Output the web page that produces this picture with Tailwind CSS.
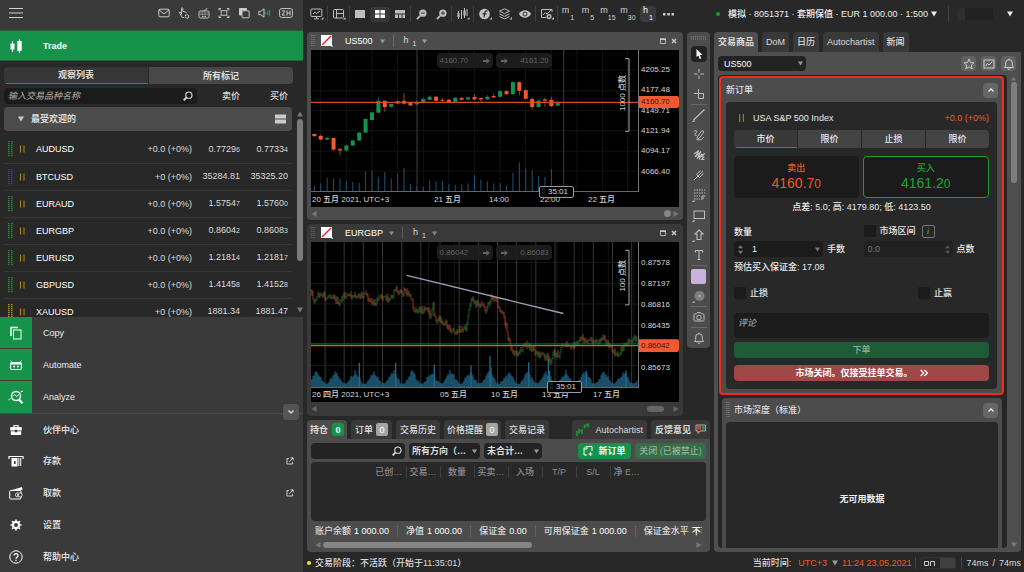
<!DOCTYPE html>
<html lang="zh-CN">
<head>
<meta charset="utf-8">
<meta name="viewport" content="width=device-width, initial-scale=1">
<title>cTrader</title>
<script src="https://cdn.jsdelivr.net/npm/@tailwindcss/browser@4"></script>
</head>
<body class="bg-[#282828] font-['Liberation_Sans','Noto_Sans_CJK_SC',sans-serif] text-[9px] leading-3 text-[#dcdcdc] font-medium">
<svg class="hidden">
  <symbol id="dn" viewBox="0 0 6 6"><path d="M0 .5h6L3 5.5z" fill="currentColor"/></symbol>
  <symbol id="up" viewBox="0 0 6 6"><path d="M0 5.5h6L3 .5z" fill="currentColor"/></symbol>
  <symbol id="lt" viewBox="0 0 6 6"><path d="M5.500 0v6L.5 3z" fill="currentColor"/></symbol>
  <symbol id="rt" viewBox="0 0 6 6"><path d="M.5 0v6L5.500 3z" fill="currentColor"/></symbol>
  <symbol id="lens" viewBox="0 0 12 12"><circle cx="7.500" cy="4.500" r="3.400" fill="none" stroke="currentColor" stroke-width="1.200"/><path d="M5 7L1.800 10.200" stroke="currentColor" stroke-width="2"/></symbol>
  <symbol id="updn" viewBox="0 0 8 12"><path d="M1 4.500h6L4 1zM1 7.500h6L4 11z" fill="currentColor"/></symbol>
  <symbol id="grip" viewBox="0 0 4 12"><path d="M.8 0v12M3 0v12" stroke="currentColor" stroke-width="1" stroke-dasharray="1 1"/></symbol>
  <symbol id="chevup" viewBox="0 0 8 8"><path d="M1.500 5.500L4 3l2.500 2.500" fill="none" stroke="currentColor" stroke-width="1.300"/></symbol>
  <symbol id="win" viewBox="0 0 6 6"><path d="M.5 1h5v4.500h-5z" fill="none" stroke="currentColor" stroke-width=".8"/><path d="M0 .5h6v1.500H0z" fill="currentColor"/></symbol>
  <symbol id="x" viewBox="0 0 6 6"><path d="M1 1l4 4M5 1L1 5" stroke="currentColor" stroke-width="1.400"/></symbol>
  <symbol id="nolink" viewBox="0 0 12 12"><path d="M0 0h11v11H0z" fill="#fff"/><path d="M1 10L10 1" stroke="#e0232b" stroke-width="1.500"/><path d="M10 12h2v-2z" fill="#ccc"/></symbol>
  <symbol id="arr" viewBox="0 0 7 6"><path d="M0 2h3.500V.3L7 3 3.500 5.700V4H0z" fill="currentColor"/></symbol>
  <symbol id="bell" viewBox="0 0 12 12"><path d="M1.500 9.500h9L9.300 7.800V5a3.300 3.300 0 0 0-6.600 0v2.800zM6 .6v1.200M4.800 10.500a1.200 1 0 0 0 2.400 0" fill="none" stroke="currentColor" stroke-width="1"/></symbol>
  <symbol id="ext" viewBox="0 0 8 8"><path d="M3 1.500H1v5.500h5.500V5M4.500 .8h2.700v2.700M7 1L3.200 4.800" fill="none" stroke="currentColor" stroke-width="1"/></symbol>
</svg>

<div class="flex h-screen w-full gap-1 overflow-hidden pr-[3px]">

  <!-- Left navigation -->
  <aside class="flex w-[303px] shrink-0 flex-col overflow-hidden">
    <header class="flex h-[30px] shrink-0 items-center bg-[#3a3a3a] pl-[9px] pr-[10px] pb-1 text-[#c9c9c9]">
      <button aria-label="菜单" class="flex"><svg class="size-[14px]" viewBox="0 0 14 14"><path d="M0 2.500h14M0 7h14M0 11.500h14" stroke="#d0d0d0" stroke-width="1.100"/></svg></button>
      <div class="ml-auto flex items-center gap-2 fill-none stroke-current">
        <button aria-label="邮件" class="flex"><svg class="size-3" viewBox="0 0 12 12"><rect x=".8" y="2.200" width="10.400" height="7.600" rx="1.200"/><path d="M1 3l5 3.800L11 3"/></svg></button>
        <button aria-label="快速交易" class="flex"><svg class="size-3" viewBox="0 0 12 12"><path d="M3.500 7.500V1.300c0-.8 1.300-.8 1.300 0v3l3 .9c.8.3.7 1 .7 1M3.500 5.500l-2.300-.3 3 5.300H6" stroke-width=".9"/><circle cx="9" cy="9.500" r="1.700" stroke-width="1.200" stroke-dasharray="1.200 .5"/></svg></button>
        <button aria-label="键盘" class="flex"><svg class="size-3" viewBox="0 0 12 12"><rect x="1" y="4" width="10" height="7" rx="1.500"/><path d="M6 4c0-2 3-.5 3-3" stroke-width=".8"/><path d="M2.500 6h7M2.500 7.700h7M4 9.500h4" stroke-dasharray="1 .6"/></svg></button>
        <button aria-label="全屏" class="flex"><svg class="size-3" viewBox="0 0 12 12"><path d="M1 3.500V1.500h2M9 1.500h2v2M11 8.500v2H9M3 10.500H1v-2M3.200 3.700h5.600v4.600H3.200zM1 1.500l2.200 2.200M11 1.500L8.800 3.700M1 10.500l2.200-2.200M11 10.500L8.800 8.300" stroke-width=".9"/></svg></button>
        <button aria-label="窗口" class="flex"><svg class="size-3" viewBox="0 0 12 12"><path d="M1.500 1.500h7v1.500H3.500v5h-2z" fill="#d0d0d0"/><rect x="4" y="3.800" width="7.200" height="7" rx=".8"/></svg></button>
        <button aria-label="声音" class="flex"><svg class="h-3 w-[13px]" viewBox="0 0 13 12"><path d="M.8 4.300h2L6 1.800v8.400L2.800 7.700h-2z"/><path d="M8 4.500v3M9.800 3.700v4.600M11.600 2.800v6.400" stroke="#239a4b"/></svg></button>
        <button aria-label="语言" class="flex"><svg class="h-3 w-[14px]" viewBox="0 0 14 12"><rect x=".6" y="1.600" width="12.800" height="8.800" rx="2"/><path d="M3 4h3L3 8h3.200M8 3.500v5M11 3.500v5M8 6h3"/></svg></button>
      </div>
    </header>

    <a href="#" class="flex h-[31px] shrink-0 items-center border-y border-[#2b5c3c] bg-[#15934a] pl-[9px] font-bold text-white">
      <svg class="h-4 w-[14px]" viewBox="0 0 14 16"><path d="M3.500 3v11M10.500 1v14" stroke="#fff"/><rect x="1.500" y="5.500" width="4" height="6" fill="#fff"/><rect x="8.300" y="3" width="4.400" height="10" fill="#fff"/></svg>
      <span class="ml-5">Trade</span>
    </a>

    <section class="flex min-h-0 flex-1 flex-col overflow-hidden pt-[6px]">
      <div class="mr-[10px] ml-1 flex h-[17px] shrink-0 gap-px overflow-hidden rounded-sm font-bold">
        <button class="flex-1 border-b border-[#239a4b] bg-[#363636]">观察列表</button>
        <button class="flex-1 bg-[#484848]">所有标记</button>
      </div>
      <div class="mt-1 ml-1 flex h-4 shrink-0 items-center pr-[15px]">
        <label class="flex h-4 w-[193px] items-center rounded-sm bg-[#1b1b1b] px-1">
          <input aria-label="搜索" placeholder="输入交易品种名称" class="min-w-0 flex-1 italic outline-none placeholder:text-[#999]">
          <svg class="size-[11px] text-[#ddd]"><use href="#lens"/></svg>
        </label>
        <span class="flex-1 text-right">卖价</span><span class="w-12 text-right">买价</span>
      </div>
      <div class="mt-[3px] flex min-h-0 flex-1">
        <div class="ml-1 min-w-0 flex-1 overflow-hidden">
          <div class="flex h-6 items-center rounded-sm bg-[#4c4c4c] pr-[6px] pl-[14px] font-bold">
            <svg class="size-[6px] text-[#ccc]"><use href="#dn"/></svg><span class="ml-[7px]">最受欢迎的</span>
            <svg class="ml-auto h-[10px] w-[11px]" viewBox="0 0 11 10"><path d="M0 .5h11v4H0zM0 5.500h11v4H0z" fill="#ccc"/></svg>
          </div>
          <table class="mt-[5px] w-full table-fixed">
            <colgroup><col class="w-8"><col><col class="w-16"><col class="w-12"><col class="w-12"></colgroup>
            <tbody id="watch"></tbody>
          </table>
        </div>
        <div class="ml-1 flex w-[7px] flex-col items-center pt-1 pb-1 text-[#777]">
          <svg class="size-[6px]"><use href="#up"/></svg>
          <div class="mt-[2px] h-[142px] w-[6px] rounded-full bg-[#7b7b7b]"></div>
          <svg class="mt-auto size-[6px]"><use href="#dn"/></svg>
        </div>
      </div>
    </section>

    <nav class="relative h-[255px] shrink-0 overflow-hidden bg-[#3a3a3a] text-[#ececec]">
      <a href="#" class="flex h-8 items-center"><span class="flex h-full w-8 items-center justify-center border-b border-[#3a3a3a] bg-[#15934a]"><svg class="size-[14px]" viewBox="0 0 14 14"><path d="M2 10V1.500h7" fill="none" stroke="#fff" stroke-width="1.500"/><rect x="4.500" y="4" width="7.500" height="9" fill="none" stroke="#fff"/></svg></span><span class="ml-[11px]">Copy</span></a>
      <a href="#" class="flex h-8 items-center"><span class="flex h-full w-8 items-center justify-center border-b border-[#3a3a3a] bg-[#15934a]"><svg class="size-[14px]" viewBox="0 0 14 14"><path d="M1.500 2.500l2 2M12.500 2.500l-2 2" stroke="#fff"/><path d="M3 4h8a2 2 0 0 1 2 2H1a2 2 0 0 1 2-2z" fill="#fff"/><rect x="1.500" y="6" width="11" height="5.500" rx="1.500" fill="none" stroke="#fff" stroke-width="1.200"/><path d="M4 8.500h2M8 8.500h2" stroke="#fff" stroke-width="1.500"/></svg></span><span class="ml-[11px]">Automate</span></a>
      <a href="#" class="flex h-8 items-center"><span class="flex h-full w-8 items-center justify-center bg-[#15934a]"><svg class="size-4" viewBox="0 0 16 16"><circle cx="8" cy="7" r="4.500" fill="none" stroke="#fff" stroke-width="1.400"/><path d="M11 10.500l3.500 3.800" stroke="#fff" stroke-width="2"/><path d="M5 7l2-1.500 1.500 2L11 5.500M.5 11l2-1.500M12.500 3l2.500-1" fill="none" stroke="#fff"/></svg></span><span class="ml-[11px]">Analyze</span></a>
      <a href="#" class="flex h-8 items-center border-t border-[#484848]"><span class="flex w-8 justify-center"><svg class="size-3" viewBox="0 0 12 12"><path d="M4 3V1.500h4V3" fill="none" stroke="#fff" stroke-width="1.200"/><path d="M.3 3h11.400v3.500H7.200v-.8H4.800v.8H.3zM.8 7.300h4v1h2.400v-1h4V11H.8z" fill="#fff"/></svg></span><span class="ml-[11px]">伙伴中心</span></a>
      <a href="#" class="flex h-8 items-center pr-[9px]"><span class="flex w-8 justify-center"><svg class="h-3 w-4" viewBox="0 0 16 12"><path d="M1 4V1.500h14V4" fill="none" stroke="#fff" stroke-width="1.200"/><rect x="3.500" y="3" width="6" height="8.500" fill="#fff"/><rect x="6" y="6" width="1.600" height="3" fill="#3a3a3a"/><path d="M10.800 3v8M12.700 3v8" stroke="#fff"/></svg></span><span class="ml-[11px]">存款</span><svg class="ml-auto size-2 text-[#ccc]"><use href="#ext"/></svg></a>
      <a href="#" class="flex h-8 items-center pr-[9px]"><span class="flex w-8 justify-center"><svg class="size-[14px]" viewBox="0 0 14 14"><path d="M3 4l10-3 .5 3z" fill="#fff"/><rect x=".7" y="4.500" width="11.300" height="8.500" rx="1" fill="none" stroke="#fff"/><rect x="6.500" y="7" width="6.500" height="3.800" rx="1.500" fill="#3a3a3a" stroke="#fff" stroke-width=".8"/><circle cx="9" cy="9" r="1" fill="#fff"/></svg></span><span class="ml-[11px]">取款</span><svg class="ml-auto size-2 text-[#ccc]"><use href="#ext"/></svg></a>
      <a href="#" class="flex h-8 items-center"><span class="flex w-8 justify-center"><svg class="size-3" viewBox="0 0 12 12"><circle cx="6" cy="6" r="3" fill="none" stroke="#fff" stroke-width="2"/><path d="M6 .5v2M6 9.500v2M.5 6h2M9.500 6h2M2.100 2.100l1.400 1.400M8.500 8.500l1.400 1.400M2.100 9.900l1.400-1.400M8.500 3.500l1.400-1.400" stroke="#fff" stroke-width="1.700"/></svg></span><span class="ml-[11px]">设置</span></a>
      <a href="#" class="flex h-8 items-center"><span class="flex w-8 justify-center"><svg class="size-[14px]" viewBox="0 0 14 14"><circle cx="7" cy="7" r="6.200" fill="none" stroke="#fff"/><path d="M5 5.500a2 2 0 1 1 3 1.800c-.7.400-1 .7-1 1.400M7 9.800v1.300" fill="none" stroke="#fff" stroke-width="1.300"/></svg></span><span class="ml-[11px]">帮助中心</span></a>
      <button aria-label="收起" class="absolute top-[87px] right-1 flex size-4 items-center justify-center rounded-sm bg-[#545454]"><svg class="size-2 rotate-180 text-[#ddd]"><use href="#chevup"/></svg></button>
    </nav>
  </aside>

  <!-- Workspace -->
  <div class="flex min-w-0 flex-1 flex-col">
    <header class="flex h-8 shrink-0 items-center pb-1">
      <div class="flex shrink-0 items-center fill-none stroke-current text-[#bdbdbd]">
        <button aria-label="图表" class="flex w-5 justify-center"><svg class="h-3 w-[14px]" viewBox="0 0 14 12"><rect x=".8" y="1" width="11" height="7.500" rx="1"/><path d="M3 6l2-2 1.500 1.500L10 3M4 10.800h5M6.500 8.500v2"/><path d="M11 11.500h2.500V9z" fill="currentColor" stroke="none"/></svg></button>
        <i class="mr-px h-4 w-px bg-[#3e3e3e]"></i>
        <button aria-label="布局" class="flex w-5 justify-center"><svg class="h-3 w-[14px]" viewBox="0 0 14 12"><rect x="1.500" y="1.500" width="10" height="8.500" rx="1"/><path d="M4.500 1.500V10M4.500 5.500h7"/><path d="M11 11.500h2.500V9z" fill="currentColor" stroke="none"/></svg></button>
        <i class="h-4 w-px bg-[#3e3e3e]"></i>
        <button aria-label="单一" class="flex w-5 justify-center"><svg class="size-[10px]" viewBox="0 0 10 10"><path d="M0 1h10v8H0z" fill="#bdbdbd" stroke="none"/></svg></button>
        <button aria-label="网格" class="flex h-[15px] w-5 items-center justify-center rounded-sm bg-[#383838]"><svg class="size-[10px]" viewBox="0 0 10 10"><path d="M0 1h4.500v3.500H0zM5.500 1H10v3.500H5.500zM0 5.500h4.500V9H0zM5.500 5.500H10V9H5.500z" fill="#fff" stroke="none"/></svg></button>
        <button aria-label="自由" class="flex w-5 justify-center"><svg class="size-[10px]" viewBox="0 0 10 10"><path d="M0 1h10v3.500H0zM0 5.500h3V9H0zM4 5.500h2.500V9H4zM7.500 5.500H10V9H7.500z" fill="#bdbdbd" stroke="none"/></svg></button>
        <i class="h-4 w-px bg-[#3e3e3e]"></i>
        <button aria-label="缩小" class="flex w-5 justify-center"><svg class="size-[11px]" viewBox="0 0 12 12"><circle cx="7.500" cy="4.500" r="4" fill="#bdbdbd" stroke="none"/><path d="M5.500 4.500h4" stroke="#282828"/><path d="M4.500 7.500L1 11" stroke-width="2"/></svg></button>
        <button aria-label="放大" class="flex w-5 justify-center"><svg class="size-[11px]" viewBox="0 0 12 12"><circle cx="7.500" cy="4.500" r="4" fill="#bdbdbd" stroke="none"/><path d="M5.500 4.500h4M7.500 2.500v4" stroke="#282828"/><path d="M4.500 7.500L1 11" stroke-width="2"/></svg></button>
        <i class="mr-px h-4 w-px bg-[#3e3e3e]"></i>
        <button aria-label="图表类型" class="flex w-5 justify-center"><svg class="h-3 w-[14px]" viewBox="0 0 14 12"><path d="M2.500 3v8M5.500 2v9M8.500 0v10M11 1v7" /><path d="M2.500 5v4M8.500 2.500v5" stroke-width="2.200"/><path d="M11 11.500h2.500V9z" fill="currentColor" stroke="none"/></svg></button>
        <i class="mr-px h-4 w-px bg-[#3e3e3e]"></i>
        <button aria-label="指标" class="flex w-5 justify-center"><svg class="h-3 w-[14px]" viewBox="0 0 14 12"><circle cx="6.500" cy="6" r="5.300" fill="#c4c4c4" stroke="none"/><path d="M9.500 3.200C7.500 2.500 7 3.500 6.800 5L6 9.300M4.500 5.800h4" stroke="#282828" stroke-width="1.200"/><path d="M11.500 11.500H14V9z" fill="currentColor" stroke="none"/></svg></button>
        <button aria-label="对象" class="flex w-5 justify-center"><svg class="h-3 w-[14px]" viewBox="0 0 14 12"><path d="M6.500 .8l5 2.400-5 2.400-5-2.400zM1.500 6l5 2.400 5-2.400M1.500 8.500l5 2.400 5-2.400"/><path d="M11.500 11.500H14V9z" fill="currentColor" stroke="none"/></svg></button>
        <button aria-label="查看选项" class="flex w-5 justify-center"><svg class="size-3" viewBox="0 0 12 12"><path d="M0 6c3-5 9-5 12 0-3 5-9 5-12 0z" fill="#c8c8c8" stroke="none"/><circle cx="6" cy="6" r="2" fill="#c8c8c8" stroke="#282828"/></svg></button>
        <i class="mr-px h-4 w-px bg-[#3e3e3e]"></i>
        <button aria-label="图表设置" class="flex w-5 justify-center"><svg class="h-3 w-[14px]" viewBox="0 0 14 12"><path d="M6 9.500H1.500v-8H12V4M3 7l2.500-2.500L7 6l4-4"/><circle cx="9" cy="8.500" r="1.800" stroke-width="1.500"/><path d="M11.500 11.500H14V9z" fill="currentColor" stroke="none"/></svg></button>
        <i class="h-4 w-px bg-[#3e3e3e]"></i>
      </div>
      <div class="flex shrink-0 items-center text-[9px] text-[#d0d0d0]">
        <button class="flex h-4 w-5 justify-center gap-px"><span class="leading-2">m</span><span class="self-end text-[7px] leading-2">1</span></button>
        <button class="flex h-4 w-5 justify-center gap-px"><span class="leading-2">m</span><span class="self-end text-[7px] leading-2">5</span></button>
        <button class="flex h-4 w-5 justify-center"><span class="leading-2">m</span><span class="self-end text-[7px] leading-2">15</span></button>
        <button class="flex h-4 w-5 justify-center"><span class="leading-2">m</span><span class="self-end text-[7px] leading-2">30</span></button>
        <button class="mx-[2px] flex h-4 w-4 justify-center gap-px rounded-sm bg-[#3a3a3a] text-white"><span class="leading-2">h</span><span class="self-end text-[7px] leading-2">1</span></button>
        <button aria-label="更多" class="flex w-5 justify-center"><svg class="h-[3px] w-[11px]" viewBox="0 0 11 3"><path d="M0 0h2.500v2.500H0zM4.300 0h2.500v2.500H4.300zM8.500 0H11v2.500H8.500z" fill="#ccc"/></svg></button>
      </div>
    </header>

    <div class="flex min-h-0 flex-1 gap-1">
      <div class="flex min-w-0 flex-1 flex-col gap-1">
        <!-- US500 chart -->
        <section class="flex min-h-0 flex-[188_1_0%] flex-col rounded-sm bg-[#4c4c4c] px-1">
          <div class="flex h-[18px] shrink-0 items-center">
            <svg class="h-3 w-1 text-[#888]"><use href="#grip"/></svg>
            <svg class="ml-[6px] size-3"><use href="#nolink"/></svg>
            <span class="ml-3 text-white">US500</span><svg class="ml-[7px] size-[5px] text-[#999]"><use href="#dn"/></svg>
            <i class="ml-2 h-3 w-px bg-[#6a6a6a]"></i>
            <span class="ml-[10px] flex h-[14px] items-start"><span class="leading-3">h</span><span class="ml-1 self-end text-[7px] leading-2">1</span></span><svg class="ml-[6px] size-[5px] text-[#999]"><use href="#dn"/></svg>
            <button aria-label="最大化" class="ml-auto"><svg class="size-[6px] text-[#ccc]"><use href="#win"/></svg></button>
            <button aria-label="关闭" class="mr-[2px] ml-[5px]"><svg class="size-[6px] text-[#ccc]"><use href="#x"/></svg></button>
          </div>
          <div class="relative flex min-h-0 flex-1 bg-black text-[8px] leading-[10px] text-[#d6d6d6]">
            <div class="flex min-w-0 flex-1 flex-col">
              <svg id="plot1" class="min-h-0 w-full flex-1 border-b border-[#666]" viewBox="20 15 981 425" preserveAspectRatio="none"></svg>
              <div class="grid h-[15px] shrink-0 grid-cols-[122fr_55fr_51fr_48fr_50fr] items-center pl-px whitespace-nowrap"><span>20 五月 2021, UTC+3</span><span>21 五月</span><span>14:00</span><span>22:00</span><span>22 五月</span></div>
            </div>
            <div class="relative mb-[15px] flex w-[41px] shrink-0 flex-col border-l border-[#777] py-[10px] pl-[2px]">
              <span class="flex flex-1 items-center">4205.25</span><span class="flex flex-1 items-center">4177.48</span><span class="flex flex-1 items-center">4149.71</span><span class="flex flex-1 items-center">4121.94</span><span class="flex flex-1 items-center">4094.17</span><span class="flex flex-1 items-center">4066.40</span>
              <span class="absolute top-[46px] right-0 left-0 flex h-3 items-center rounded-r-xs bg-[#f05a32] pl-[2px] text-[#401505]">4160.7<small class="text-[7px]">0</small></span>
            </div>
            <div class="absolute inset-x-0 top-[3px] flex justify-center gap-[3px] pr-[2px] text-[#626262]">
              <button class="flex h-[15px] w-14 items-center justify-between rounded-sm bg-[#1f1f1f]/90 px-[3px]"><span>4160.7<small class="text-[7px]">0</small></span><svg class="h-[6px] w-[7px]"><use href="#arr"/></svg></button>
              <button class="flex h-[15px] w-14 items-center justify-between rounded-sm bg-[#1f1f1f]/90 pr-[3px] pl-[5px]"><svg class="h-[6px] w-[7px]"><use href="#arr"/></svg><span>4161.2<small class="text-[7px]">0</small></span></button>
            </div>
            <span class="absolute top-[25px] right-[51px] rotate-180 [writing-mode:vertical-rl] [text-orientation:sideways]">1000 点数</span>
            <span class="absolute right-[105px] bottom-[9px] flex h-3 w-[35px] items-center gap-[3px] rounded-xs border border-[#999] bg-black px-[2px]"><svg class="h-2 w-[3px] text-[#777]" viewBox="0 0 4 12"><use href="#grip"/></svg>35:01</span>
          </div>
          <div class="flex h-[13px] shrink-0 items-center text-[#777]"><svg class="size-[6px]"><use href="#lt"/></svg><i class="ml-auto size-[7px] rounded-full bg-[#858585]"></i><svg class="ml-[2px] size-[6px]"><use href="#rt"/></svg></div>
        </section>

        <!-- EURGBP chart -->
        <section class="flex min-h-0 flex-[192_1_0%] flex-col rounded-sm bg-[#393939] px-1">
          <div class="flex h-[18px] shrink-0 items-center">
            <svg class="h-3 w-1 text-[#707070]"><use href="#grip"/></svg>
            <svg class="ml-[6px] size-3"><use href="#nolink"/></svg>
            <span class="ml-3 text-white">EURGBP</span><svg class="ml-[6px] size-[5px] text-[#888]"><use href="#dn"/></svg>
            <i class="ml-2 h-3 w-px bg-[#5a5a5a]"></i>
            <span class="ml-[10px] flex h-[14px] items-start"><span class="leading-3">h</span><span class="ml-1 self-end text-[7px] leading-2">1</span></span><svg class="ml-[6px] size-[5px] text-[#888]"><use href="#dn"/></svg>
            <button aria-label="最大化" class="ml-auto"><svg class="size-[6px] text-[#ccc]"><use href="#win"/></svg></button>
            <button aria-label="关闭" class="mr-[2px] ml-[5px]"><svg class="size-[6px] text-[#ccc]"><use href="#x"/></svg></button>
          </div>
          <div class="relative flex min-h-0 flex-1 bg-black text-[8px] leading-[10px] text-[#d6d6d6]">
            <div class="flex min-w-0 flex-1 flex-col">
              <svg id="plot2" class="min-h-0 w-full flex-1 border-b border-[#666]" viewBox="20 67 981 438" preserveAspectRatio="none"></svg>
              <div class="grid h-[14px] shrink-0 grid-cols-[128fr_51fr_51fr_51fr_45fr] items-center pl-px whitespace-nowrap"><span>26 四月 2021, UTC+3</span><span>05 五月</span><span>10 五月</span><span>13 五月</span><span>17 五月</span></div>
            </div>
            <div class="relative mb-[14px] flex w-[41px] shrink-0 flex-col border-l border-[#777] pt-[11px] pb-[10px] pl-[2px]">
              <span class="flex flex-1 items-center">0.87578</span><span class="flex flex-1 items-center">0.87197</span><span class="flex flex-1 items-center">0.86816</span><span class="flex flex-1 items-center">0.86435</span><span class="flex-1"></span><span class="flex flex-1 items-center">0.85673</span>
              <span class="absolute top-[97px] right-0 left-0 flex h-[13px] items-center rounded-r-xs border-t border-[#15934a] bg-[#f05a32] pl-[2px] text-[#401505]">0.8604<small class="text-[7px]">2</small></span>
            </div>
            <div class="absolute inset-x-0 top-[3px] flex justify-center gap-[3px] pr-[2px] text-[#626262]">
              <button class="flex h-[15px] w-14 items-center justify-between rounded-sm bg-[#1f1f1f]/90 px-[3px]"><span>0.8604<small class="text-[7px]">2</small></span><svg class="h-[6px] w-[7px]"><use href="#arr"/></svg></button>
              <button class="flex h-[15px] w-14 items-center justify-between rounded-sm bg-[#1f1f1f]/90 pr-[3px] pl-[5px]"><svg class="h-[6px] w-[7px]"><use href="#arr"/></svg><span>0.8608<small class="text-[7px]">3</small></span></button>
            </div>
            <span class="absolute top-[18px] right-[51px] rotate-180 [writing-mode:vertical-rl] [text-orientation:sideways]">100 点数</span>
            <span class="absolute right-[97px] bottom-[9px] flex h-3 w-[35px] items-center gap-[3px] rounded-xs border border-[#999] bg-black px-[2px]"><svg class="h-2 w-[3px] text-[#777]" viewBox="0 0 4 12"><use href="#grip"/></svg>35:01</span>
          </div>
          <div class="flex h-[14px] shrink-0 items-center text-[#666]"><svg class="size-[6px]"><use href="#lt"/></svg><i class="ml-auto h-[6px] w-[17px] rounded-full bg-[#666]"></i><svg class="ml-[9px] size-[6px]"><use href="#rt"/></svg></div>
        </section>
      </div>

      <!-- Drawing tools -->
      <div class="flex w-[23px] shrink-0 flex-col items-center self-start rounded-sm bg-[#4c4c4c] pt-1 text-[#bdbdbd]">
        <svg class="mb-1 h-1 w-4" viewBox="0 0 16 4"><path d="M0 .8h16M0 3h16" stroke="#888" stroke-dasharray="1 1"/></svg>
        <button aria-label="光标" class="my-[2px] flex size-4 items-center justify-center rounded-sm bg-[#222]"><svg class="size-[10px]" viewBox="0 0 10 10"><path d="M2.500 0v8l2-1.500L5.700 10l1.500-.6L6 6h2.500z" fill="#fff"/></svg></button>
        <button aria-label="十字" class="flex size-5 items-center justify-center"><svg class="size-3" viewBox="0 0 12 12"><path d="M6 1v3.500M6 7.500V11M1 6h3.500M7.500 6H11" stroke="currentColor"/></svg></button>
        <button aria-label="标记" class="flex size-5 items-center justify-center"><svg class="size-3" viewBox="0 0 12 12"><path d="M1 5.500h4M5.500 1v4M5.500 5.500h5v5h-5z" fill="none" stroke="currentColor"/></svg></button>
        <i class="h-px w-4 bg-[#686868]"></i>
        <button aria-label="线" class="flex size-5 items-center justify-center"><svg class="size-[14px]" viewBox="0 0 14 14"><path d="M1.500 12L12.500 1.500" stroke="currentColor" stroke-width="1.200"/><path d="M0 14h2.500v-2.500z" fill="currentColor"/></svg></button>
        <button aria-label="铅笔" class="flex size-5 items-center justify-center"><svg class="size-3" viewBox="0 0 12 12"><path d="M1 2.500c2.500-2 3.500-.5 2 1.500S1.500 7 3.500 6.500M4 10.500l.5-3 4.500-6 2 1.500-4.500 6zC6.500 12 9.500 10 11 8" fill="none" stroke="currentColor" stroke-width="1"/></svg></button>
        <button aria-label="画笔" class="flex size-5 items-center justify-center"><svg class="size-3" viewBox="0 0 12 12"><path d="M1 5l5-3.500L2 8l6-5.500L4 9.500l5-4.500-3 5.500M8 6l3-1-2 2.500 2 .5-2.500 2.500h3" fill="none" stroke="currentColor" stroke-width="1.100"/></svg></button>
        <button aria-label="叉形" class="flex size-5 items-center justify-center"><svg class="size-3" viewBox="0 0 12 12"><path d="M1 11l4-4M3.500 5.500l3 3M3.500 5.500L7.500 1.500M5 7l5-5M6.500 8.500l4-4" fill="none" stroke="currentColor" stroke-width="1"/></svg></button>
        <button aria-label="斐波那契" class="flex size-5 items-center justify-center"><svg class="size-[14px]" viewBox="0 0 14 14"><path d="M2 2h11M2 5h11M2 8h6M2 11h6" stroke="currentColor" stroke-dasharray="1.500 1"/><path d="M10 12V8h3M10 10h2" fill="none" stroke="currentColor"/><path d="M0 14h2.500v-2.500z" fill="currentColor"/></svg></button>
        <button aria-label="矩形" class="flex size-5 items-center justify-center"><svg class="size-[14px]" viewBox="0 0 14 14"><rect x="2" y="3" width="10.500" height="7.500" fill="none" stroke="currentColor"/><path d="M0 14h2.500v-2.500z" fill="currentColor"/></svg></button>
        <button aria-label="箭头" class="flex size-5 items-center justify-center"><svg class="size-[14px]" viewBox="0 0 14 14"><path d="M7 2l4 4H9v5.500H5V6H3z" fill="none" stroke="currentColor" stroke-width="1.100"/><path d="M0 14h2.500v-2.500z" fill="currentColor"/></svg></button>
        <button aria-label="文本" class="flex size-5 items-center justify-center"><svg class="size-[10px]" viewBox="0 0 10 10"><path d="M1.500 2.500v-2h7v2M5 .5v9M3.500 9.500h3" fill="none" stroke="currentColor" stroke-width="1.100"/></svg></button>
        <i class="h-px w-4 bg-[#686868]"></i>
        <button aria-label="颜色" class="my-[2px] mt-[3px] size-[15px] rounded-xs bg-[#c9b1dc]"></button>
        <button aria-label="粗细" class="flex size-5 items-center justify-center"><svg class="size-[14px]" viewBox="0 0 14 14"><circle cx="7.500" cy="7" r="5" fill="#808080"/><circle cx="7.500" cy="7" r="1" fill="#bbb"/><path d="M0 14h2.500v-2.500z" fill="currentColor"/></svg></button>
        <i class="h-px w-4 bg-[#686868]"></i>
        <button aria-label="截图" class="flex size-5 items-center justify-center"><svg class="size-3" viewBox="0 0 12 12"><path d="M1 4c0-1.500 1.500-1 2.500-1.200L4.500 1.500h3l1 1.300C9.500 3 11 2.500 11 4v5c0 1-1 1-1 1H2S1 10 1 9z" fill="none" stroke="currentColor"/><circle cx="6" cy="6.500" r="2.300" fill="none" stroke="currentColor"/></svg></button>
        <i class="h-px w-4 bg-[#686868]"></i>
        <button aria-label="提醒" class="flex size-5 items-center justify-center"><svg class="size-3"><use href="#bell"/></svg></button>
      </div>
    </div>

    <!-- Positions -->
    <div class="mt-1 flex h-[19px] shrink-0 gap-1 whitespace-nowrap">
      <button class="flex items-center gap-1 rounded-t-sm bg-[#4c4c4c] px-[3px] font-bold">持仓<span class="flex h-[13px] w-3 items-center justify-center rounded-xs bg-[#15934a] text-white">0</span></button>
      <button class="flex items-center gap-[3px] rounded-t-sm bg-[#393939] px-1">订单<span class="flex h-[13px] w-3 items-center justify-center rounded-xs bg-[#a5a5a5] text-white">0</span></button>
      <button class="rounded-t-sm bg-[#393939] px-1">交易历史</button>
      <button class="flex items-center gap-[3px] rounded-t-sm bg-[#393939] px-[3px]">价格提醒<span class="flex h-[13px] w-3 items-center justify-center rounded-xs bg-[#a5a5a5] text-white">0</span></button>
      <button class="rounded-t-sm bg-[#393939] px-1">交易记录</button>
      <button class="ml-auto flex items-center gap-[6px] rounded-t-sm bg-[#393939] px-1"><svg class="size-[13px]" viewBox="0 0 13 13"><path d="M1 8v5M3 5.500v5M6 6v5M8.500 1.500v4M12 .5v4" stroke="#1c9a34" stroke-width="1.600"/><path d="M9 3h2M3 8h2M10 1.500h2" stroke="#1c9a34"/></svg>Autochartist</button>
      <button class="flex items-center gap-1 rounded-t-sm bg-[#393939] px-1 font-bold">反馈意见<svg class="size-[11px]" viewBox="0 0 11 11"><path d="M1 1h9.500v6H5L3 9.500V7H1z" fill="#444" stroke="#aaa"/><path d="M2 2h4v3.500H2z" fill="#e03a2a"/><path d="M7 2h2.500v3.500H7z" fill="#1c9a48"/></svg></button>
    </div>
    <section class="flex h-[113px] shrink-0 flex-col rounded-b-sm bg-[#4c4c4c] px-1 pt-1">
      <div class="flex h-4 gap-1">
        <label class="flex w-[94px] items-center rounded-sm bg-[#232323] px-[3px]"><input aria-label="搜索持仓" class="min-w-0 flex-1 outline-none"><svg class="size-[11px] text-[#ddd]"><use href="#lens"/></svg></label>
        <label class="relative flex w-[71px] items-center"><select aria-label="方向" class="h-full w-full appearance-none rounded-sm bg-[#232323] pr-3 pl-[3px] font-bold"><option>所有方向（…</option></select><svg class="absolute right-[3px] size-[5px] text-[#999]"><use href="#dn"/></svg></label>
        <label class="relative flex w-[58px] items-center"><select aria-label="合计" class="h-full w-full appearance-none rounded-sm bg-[#232323] pr-3 pl-[3px] font-bold"><option>未合计…</option></select><svg class="absolute right-[3px] size-[5px] text-[#999]"><use href="#dn"/></svg></label>
        <button class="ml-auto flex w-[53px] items-center justify-center gap-[5px] rounded-sm bg-[#15934a] font-bold text-white"><svg class="size-[10px]" viewBox="0 0 10 10"><path d="M4 9H1V2.500L3 .5h6V5M7.500 6v4M5.500 8h4M4 .8V3H1.200" fill="none" stroke="#fff" stroke-width="1"/></svg>新订单</button>
        <button class="w-[71px] rounded-sm bg-[#366c48] whitespace-nowrap text-[#9ab3a2]" disabled>关闭 (已被禁止)</button>
      </div>
      <div class="mt-[3px] h-[59px] rounded-sm bg-[#282828] pt-1 text-[#8b8b8b]">
        <table class="w-full table-fixed text-center whitespace-nowrap">
          <colgroup><col class="w-[61px]"><col class="w-[34px]"><col class="w-[34px]"><col class="w-[34px]"><col class="w-[34px]"><col class="w-[34px]"><col class="w-[34px]"><col class="w-[34px]"><col></colgroup>
          <thead><tr class="*:border-r *:border-[#3e3e3e] *:font-medium"><th class="border-none"></th><th>已创…</th><th>交易…</th><th>数量</th><th>买卖…</th><th>入场</th><th>T/P</th><th>S/L</th><th class="border-none pl-[3px] text-left">净 E…</th></tr></thead>
        </table>
      </div>
      <div class="mr-1 flex h-5 items-center overflow-hidden pl-1 whitespace-nowrap *:flex *:h-3 *:shrink-0 *:gap-[3px] *:border-[#626262]">
        <span class="border-r pr-2">账户余额 <span class="text-white">1 000.00</span></span><span class="border-r px-2">净值 <span class="text-white">1 000.00</span></span><span class="border-r px-2">保证金 <span class="text-white">0.00</span></span><span class="border-r px-2">可用保证金 <span class="text-white">1 000.00</span></span><span class="pl-2">保证金水平 <span class="text-white">不可</span></span>
      </div>
      <div class="flex h-2 items-center px-1 text-[#777]"><svg class="size-[6px]"><use href="#lt"/></svg><i class="ml-[2px] h-[6px] w-[54%] rounded-full bg-[#858585]"></i><svg class="ml-auto size-[6px]"><use href="#rt"/></svg></div>
    </section>
    <footer class="flex h-5 shrink-0 items-center gap-1 pt-[2px] whitespace-nowrap"><i class="size-1 rounded-full bg-[#f5e02c]"></i>交易阶段：不活跃（开始于11:35:01）</footer>
  </div>

  <!-- Right: account bar, symbol panel -->
  <div class="flex w-[307px] shrink-0 flex-col">
    <header class="flex h-8 shrink-0 items-center pr-2 pb-1 whitespace-nowrap text-[#eee]">
      <i class="mr-2 ml-[2px] size-1 shrink-0 rounded-full bg-[#1c9a2c]"></i>
      <span>模拟 · 8051371 · 套期保值 · EUR 1 000.00 · 1:500</span>
      <svg class="ml-[3px] size-[6px] shrink-0"><use href="#dn"/></svg>
      <i class="mx-2 ml-[11px] h-4 w-px bg-[#444]"></i>
      <i class="flex h-3 w-9"><i class="w-2 rounded-l-sm bg-[#2f2f2f]"></i><i class="flex-1 bg-[#222]"></i></i>
      <svg class="ml-auto size-[6px] shrink-0"><use href="#dn"/></svg>
    </header>
    <div class="flex h-5 shrink-0 gap-1 *:rounded-t-sm *:bg-[#393939] *:px-1">
      <button class="bg-[#4f4f4f]! font-bold">交易商品</button><button>DoM</button><button>日历</button><button>Autochartist</button><button>新闻</button>
    </div>
    <section class="flex min-h-0 flex-1 flex-col rounded-b-sm bg-[#4f4f4f] p-1">
      <div class="mb-1 flex h-[15px] shrink-0 items-center gap-[5px] pr-px text-[#ccc]">
        <label class="relative mr-auto flex h-[15px] w-[88px] items-center"><select aria-label="交易品种" class="h-full w-full appearance-none rounded-sm bg-[#232323] pl-[6px] text-white"><option>US500</option></select><svg class="absolute right-[3px] size-[5px] text-[#999]"><use href="#dn"/></svg></label>
        <button aria-label="收藏" class="flex size-[15px] items-center justify-center rounded-sm bg-[#626262]"><svg class="size-3" viewBox="0 0 12 12"><path d="M6 1l1.500 3.500 3.500.3-2.700 2.400.9 3.600L6 8.800l-3.200 2 .9-3.600L1 4.800l3.500-.3z" fill="none" stroke="currentColor"/></svg></button>
        <button aria-label="图表" class="flex size-[15px] items-center justify-center rounded-sm bg-[#626262]"><svg class="size-3" viewBox="0 0 12 12"><rect x="1" y="2" width="10" height="8" fill="none" stroke="currentColor"/><path d="M2.500 8l2-2.500L6 7l3.500-3.500" fill="none" stroke="currentColor"/></svg></button>
        <button aria-label="提醒" class="flex size-[15px] items-center justify-center rounded-sm bg-[#626262]"><svg class="size-3"><use href="#bell"/></svg></button>
      </div>
      <div class="flex min-h-0 flex-1">
        <div class="flex min-w-0 flex-1 flex-col overflow-hidden rounded-sm bg-[#262626] px-px pt-px">
          <form class="mr-[2px] shrink-0 rounded border-2 border-[#f32a17] bg-[#4c4c4c] px-[5px] pb-1">
            <div class="flex h-6 items-center">新订单<button type="button" aria-label="折叠" class="-mr-px ml-auto flex size-[15px] items-center justify-center rounded-sm bg-[#666]"><svg class="size-2 text-[#eee]"><use href="#chevup"/></svg></button></div>
            <div class="rounded-sm bg-[#282828] px-2 pt-[10px] pb-2 text-[#eaeaea]">
              <div class="flex h-3 items-center pl-[5px]"><svg class="h-2 w-[5px]" viewBox="0 0 5 8"><path d="M.7 0v8M4.300 0v8" stroke="#b28a22"/></svg><span class="ml-[9px]">USA S&amp;P 500 Index</span><span class="ml-auto text-[#e0602c]">+0.0 (+0%)</span></div>
              <div class="mt-[6px] flex h-[18px] gap-px overflow-hidden rounded-sm *:flex-1 *:bg-[#444]">
                <button type="button" class="border-b border-[#239a4b] bg-[#383838]!">市价</button><button type="button">限价</button><button type="button">止损</button><button type="button">限价</button>
              </div>
              <div class="mt-2 flex h-[42px] gap-1 *:flex *:flex-1 *:flex-col *:items-center *:justify-center *:rounded *:bg-[#1b1b1b]">
                <button type="button" class="text-[#ec5a24]">卖出<span class="text-[14px] leading-[18px]">4160.7<small class="text-[12px]">0</small></span></button>
                <button type="button" class="border border-[#1c9a34] text-[#1fa336]">买入<span class="text-[14px] leading-[18px]">4161.2<small class="text-[12px]">0</small></span></button>
              </div>
              <p class="mt-[3px] text-center">点差: 5.0; 高: 4179.80; 低: 4123.50</p>
              <div class="mt-3 grid grid-cols-2 gap-x-1 gap-y-1">
                <label for="qty" class="self-end leading-[10px]">数量</label>
                <div class="flex h-3 items-center"><input id="range" type="checkbox" class="size-3 appearance-none rounded-xs bg-[#1b1b1b]"><label for="range" class="ml-1">市场区间</label><span class="ml-[6px] flex size-[13px] items-center justify-center rounded-xs border border-[#777] font-['Liberation_Serif',serif] italic text-[#999]">i</span></div>
                <div class="flex h-4 items-center"><span class="relative flex h-4 w-[89px] items-center rounded-sm bg-[#1b1b1b]"><svg class="ml-[3px] h-[11px] w-[7px] shrink-0 text-[#777]"><use href="#updn"/></svg><input id="qty" value="1" class="ml-2 w-10 outline-none"><svg class="absolute right-[3px] size-[5px] text-[#777]"><use href="#dn"/></svg></span><span class="ml-1">手数</span></div>
                <div class="flex h-4 items-center"><span class="flex h-4 w-[89px] items-center rounded-sm bg-[#212121] text-[#777]"><input aria-label="点数" value="0.0" disabled class="ml-1 w-10 outline-none"><svg class="mr-[2px] ml-auto h-[11px] w-[7px] text-[#555]"><use href="#updn"/></svg></span><span class="ml-1">点数</span></div>
              </div>
              <p class="mt-1">预估买入保证金: 17.08</p>
              <div class="mt-[14px] flex h-3 items-center">
                <input id="sl" type="checkbox" class="size-3 appearance-none rounded-xs bg-[#1b1b1b]"><label for="sl" class="ml-1 w-[168px]">止损</label>
                <input id="tp" type="checkbox" class="size-3 appearance-none rounded-xs bg-[#1b1b1b]"><label for="tp" class="ml-1">止赢</label>
              </div>
              <textarea aria-label="评论" placeholder="评论" class="mt-[14px] block h-[25px] w-full resize-none rounded-sm bg-[#1b1b1b] px-1 py-1 italic outline-none placeholder:text-[#999]"></textarea>
              <button type="button" class="mt-1 h-4 w-full rounded-sm bg-[#1f5b37] text-[#8fae9a]" disabled>下单</button>
              <button type="button" class="mt-[7px] flex h-4 w-full items-center justify-center gap-[7px] rounded-sm bg-[#9f4848] font-bold text-white">市场关闭。仅接受挂单交易。<svg class="size-2" viewBox="0 0 8 8"><path d="M.7 1l3 3-3 3M4.400 1l3 3-3 3" fill="none" stroke="#fff" stroke-width="1.200"/></svg></button>
            </div>
          </form>
          <section class="mt-[3px] mr-1 ml-[3px] flex min-h-0 flex-1 flex-col rounded-t-sm bg-[#4c4c4c] px-1">
            <div class="flex h-6 shrink-0 items-center"><svg class="h-4 w-1 text-[#888]" viewBox="0 0 4 16"><path d="M.8 0v16M3 0v16" stroke="currentColor" stroke-dasharray="1 1"/></svg><span class="ml-1">市场深度（标准）</span><button aria-label="折叠" class="ml-auto flex size-[15px] items-center justify-center rounded-sm bg-[#666]"><svg class="size-2 text-[#eee]"><use href="#chevup"/></svg></button></div>
            <div class="flex flex-1 items-center justify-center rounded-t-sm bg-[#282828] pt-7 font-bold text-[#eee]">无可用数据</div>
          </section>
        </div>
        <div class="flex w-[10px] shrink-0 flex-col items-center pt-px pl-[3px] text-[#777]">
          <svg class="size-[5px] shrink-0"><use href="#up"/></svg><i class="mt-px h-[101px] w-[6px] rounded-full bg-[#7e7e7e]"></i><svg class="mt-auto size-[6px] shrink-0"><use href="#dn"/></svg>
        </div>
      </div>
    </section>
    <footer class="flex h-5 shrink-0 items-center justify-end pt-[2px] whitespace-nowrap">
      当前时间:<button class="ml-[7px] flex items-center gap-[5px] text-[#ec5a24]">UTC+3<svg class="size-[6px] text-[#999]"><use href="#dn"/></svg></button>
      <span class="ml-1 text-[#ec5a24]">11:24 23.05.2021</span>
      <i class="mx-1 h-3 w-px bg-[#444]"></i>
      <button aria-label="开关" class="flex h-3 w-9 items-center justify-between rounded-xs border border-[#333] pl-[3px]"><svg class="h-[5px] w-[11px]" viewBox="0 0 11 5"><path d="M.5 .5h4v4h-4zM6.500 5V.5h4V5" fill="none" stroke="#ccc"/></svg><i class="h-full w-[15px] bg-[#404040]"></i></button>
      <i class="mr-1 ml-[5px] h-3 w-px bg-[#444]"></i><span class="flex gap-1"><span>74ms</span><span>/</span><span>74ms</span></span>
    </footer>
  </div>
</div>

<script>
const rows = [
  ['AUDUSD','+0.0 (+0%)','0.7729','6','0.7733','4','#2a8a34'],
  ['BTCUSD','+0 (+0%)','35284.81','','35325.20','','#5a3a78'],
  ['EURAUD','+0.0 (+0%)','1.5754','7','1.5760','0','#2a8a34'],
  ['EURGBP','+0.0 (+0%)','0.8604','2','0.8608','3','#2a8a34'],
  ['EURUSD','+0.0 (+0%)','1.2181','4','1.2181','7','#2a8a34'],
  ['GBPUSD','+0.0 (+0%)','1.4145','8','1.4152','8','#2a8a34'],
  ['XAUUSD','+0 (+0%)','1881.34','','1881.47','','#b8962a'],
];
document.getElementById('watch').innerHTML = rows.map(r => `<tr class="h-[27px] border-b border-[#363636] text-right">
<td class="pl-1"><svg class="h-4 w-[17px]" viewBox="0 0 17 16"><path d="M.8 0v16M3.800 0v16" stroke="${r[6]}" stroke-width="1.500" stroke-dasharray="1.200 .8"/><path d="M12.500 4.500v7M16 4.500v7" stroke="#b28a22"/></svg></td>
<td class="text-left text-white">${r[0]}</td><td class="pr-1">${r[1]}</td><td class="pr-1">${r[2]}<small class="text-[7px]">${r[3]}</small></td><td class="pr-1">${r[4]}<small class="text-[7px]">${r[5]}</small></td></tr>`).join('');

const G = '#15934a', R = '#f05a32';
const line = (x1,y1,x2,y2,c,w=2) => `<path d="M${x1} ${y1}L${x2} ${y2}" stroke="${c}" stroke-width="${w}"/>`;

// US500: colour, body top, body bottom, wick top, wick bottom, volume top
const candles = [
[R,268,275,268,275,424],[R,274,285,270,287,417],[G,280,285,277,287,400],[R,280,315,280,318,402],[R,314,318,310,332,402],[G,303,318,300,322,412],[G,288,303,286,303,413],[G,264,288,262,288,415],[G,223,264,221,264,381],[G,203,226,201,227,377],[G,168,204,157,204,398],[R,168,187,168,201,383],[G,178,186,176,190,402],[G,169,177,165,178,390],[R,168,177,145,180,370],[R,174,182,172,184,419],[G,174,179,168,182,426],[G,163,175,158,176,427],[G,156,165,152,167,408],[R,156,168,153,168,410],[R,165,168,160,172,410],[R,165,172,163,174,420],[G,159,171,157,172,421],[R,160,165,155,167,420],[G,158,164,155,167,417],[R,157,164,148,166,392],[R,160,164,158,173,405],[G,156,164,151,165,411],[R,154,158,147,160,417],[G,139,156,137,158,417],[R,139,148,137,150,424],[G,112,148,110,150,385],[R,112,138,110,152,354],[R,136,162,134,164,372],[R,163,187,158,195,377],[G,168,187,166,188,394],[R,164,168,158,186,397],[R,165,184,156,187,374],[G,174,183,170,184,435]];
let s = '';
[49,126,203,280,357,433,510,587,664,741,818,895,970].forEach(x => s += line(x,15,x,440,'#1b1b1b'));
[75,138,198,258,320,380].forEach(y => s += line(20,y,1001,y,'#1b1b1b'));
[338,778].forEach(x => s += line(x,15,x,440,'#3c3c3c',3));
candles.forEach((c,i) => {
  const x = 30 + i*19.22;
  s += line(x,440,x,c[5],'#1d5474',3) + line(x,c[3],x,c[4],c[0],2) + `<rect x="${x-6}" y="${c[1]}" width="12" height="${c[2]-c[1]}" fill="${c[0]}"/>`;
});
s += line(20,173,1001,173,'#d24a2a',4);
s += '<path d="M962 41h12v219h-12" fill="none" stroke="#aaa" stroke-width="3"/>';
document.getElementById('plot1').innerHTML = s;

// EURGBP
let seed = 7;
const rnd = () => (seed = (seed*16807) % 2147483647) / 2147483647;
const way = [[20,215],[28,245],[38,230],[50,226],[70,236],[85,228],[105,250],[125,226],[145,234],[165,230],[185,226],[200,248],[215,252],[230,226],[245,240],[265,230],[273,205],[290,224],[305,215],[318,232],[330,270],[345,274],[370,265],[378,300],[385,252],[392,298],[410,308],[425,316],[440,334],[455,342],[470,330],[485,325],[492,285],[500,238],[515,255],[530,254],[545,270],[560,236],[577,240],[585,275],[595,278],[605,320],[615,370],[630,405],[650,395],[665,375],[680,388],[700,405],[715,408],[730,418],[737,432],[745,408],[765,404],[775,375],[790,380],[800,386],[815,375],[835,356],[850,366],[865,368],[885,365],[897,348],[910,375],[925,398],[940,412],[955,385],[965,372],[980,363],[1001,357]];
let t = '';
for (let k=0;k<17;k++) t += line(62+k*57.5,67,62+k*57.5,505,'#363636',3);
for (let k=0;k<13;k++) t += line(65+k*77,67,65+k*77,505,'#1f1f1f',2);
[129,192,254,316,440].forEach(y => t += line(20,y,1001,y,'#222'));
for (let x=20;x<1001;x+=3) {
  const d = Math.abs(((x-36+28.8+5760)%57.6)-28.8);
  const h = 8 + Math.max(0, 36*(1-d/24)) * (.75+rnd()*.45) + rnd()*5;
  t += line(x,505,x,505-h,'#20688a',3);
}
[[165,432],[274,432],[390,437],[500,440],[557,412],[560,445],[673,430],[732,422],[736,455],[846,458],[965,455]].forEach(v => t += line(v[0],505,v[0],v[1],'#20688a',4));
let j = 0, prev = 215;
for (let x=20;x<1001;x+=3) {
  while (way[j+1][0] < x) j++;
  const a = way[j], b = way[j+1];
  const y = a[1] + (b[1]-a[1])*(x-a[0])/(b[0]-a[0]) + (rnd()-.5)*15;
  const c = y < prev ? '#1c8a44' : '#d04f2f';
  t += line(x, Math.min(prev,y)-rnd()*9, x, Math.max(prev,y)+rnd()*9, c, 2);
  prev = y;
}
t += line(20,375,1001,375,'#1a7a3c',3) + line(20,380,1001,380,'#e0552f',4);
t += line(307,168,777,283,'#a79ab6',4);
t += '<path d="M962 92h12v165h-12" fill="none" stroke="#aaa" stroke-width="3"/>';
document.getElementById('plot2').innerHTML = t;
</script>
</body>
</html>
